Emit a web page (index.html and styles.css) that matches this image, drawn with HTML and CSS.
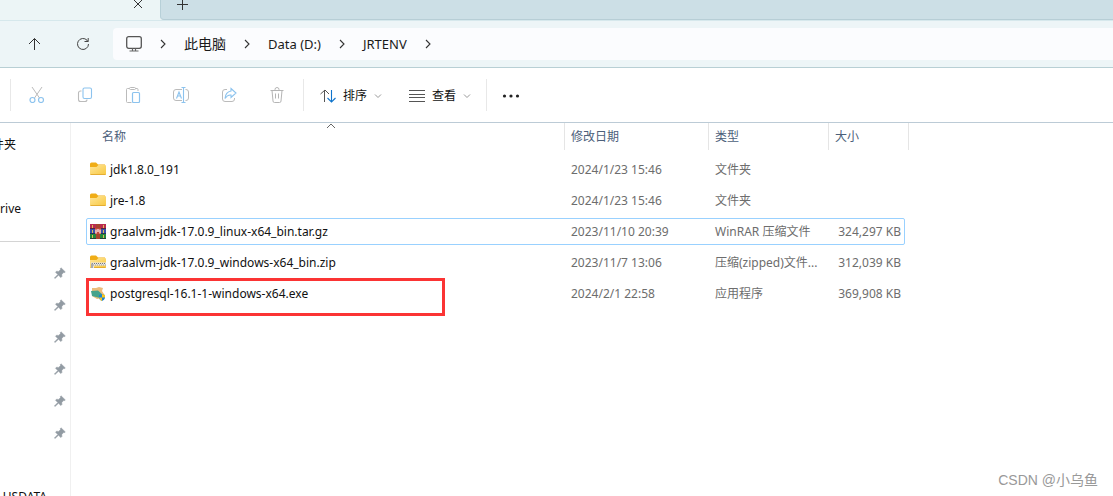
FILE: index.html
```html
<!DOCTYPE html>
<html lang="zh-CN">
<head>
<meta charset="utf-8">
<title>JRTENV</title>
<meta name="viewport" content="width=device-width, initial-scale=1">
<link rel="stylesheet" href="styles.css">
</head>
<body>
<svg class="defs" aria-hidden="true">
  <linearGradient id="folder-fill" x1="0" y1="0" x2="1" y2="1"><stop offset="0" stop-color="#ffe69a"/><stop offset="1" stop-color="#f8c840"/></linearGradient>
  <symbol id="chevron" viewBox="0 0 8 10"><path d="M2 1l4 4-4 4" fill="none" stroke="#333" stroke-width="1.1"/></symbol>
  <symbol id="down" viewBox="0 0 8 8"><path d="M1 2.5l3 3 3-3" fill="none" stroke="#999"/></symbol>
  <symbol id="pin" viewBox="0 0 12 12"><path d="M7 .8l4.3 4.1-1.1.8-.7-.1-1.7 1.8.1 2.2-1 1-2.4-2.3L1 11.6l-.6-.6 3.4-3.5-2.3-2.3 1-1 2.2.2L6.500 2.500l-.2-.9z" fill="#929ba3" stroke="#929ba3" stroke-width=".5"/></symbol>
  <symbol id="folder" viewBox="0 0 16 14"><path d="M0 2a1.500 1.500 0 0 1 1.500-1.500H6L8 2.500h7v4H0z" fill="#f0ad16"/><path d="M0 5h6.500L8.500 3H15a1 1 0 0 1 1 1v8a1 1 0 0 1-1 1H1a1 1 0 0 1-1-1z" fill="url(#folder-fill)"/><path d="M.5 12.500h15" stroke="#e5ad32"/></symbol>
</svg>

<header class="tabs">
  <div class="tab"><button class="plain" aria-label="关闭标签页"><svg width="10" height="10" viewBox="0 0 10 10"><path d="M1 0l8 8M9 0L1 8" stroke="#333"/></svg></button></div>
  <div class="tab-rest"><button class="plain" aria-label="新建标签页"><svg width="11" height="11" viewBox="0 0 11 11"><path d="M5.500 0v10M0 4.500h11" stroke="#333"/></svg></button></div>
</header>

<nav class="nav" aria-label="地址栏">
  <button class="plain nav-button" aria-label="向上"><svg width="14" height="14" viewBox="0 0 14 14"><path d="M6.500 13V1.500M1 7l5.500-5.500L12 7" fill="none" stroke="#333"/></svg></button>
  <button class="plain nav-button" aria-label="刷新"><svg width="14" height="14" viewBox="0 0 14 14"><path d="M12.500 7A5.500 5.500 0 1 1 11 3.200L12 4.500M12.200 1v3.500H8.500" fill="none" stroke="#444"/></svg></button>
  <div class="address">
    <svg width="16" height="16" viewBox="0 0 16 16"><rect x=".7" y=".7" width="14.600" height="11.600" rx="2" fill="none" stroke="#555" stroke-width="1.300"/><path d="M6.500 12.500V15M9.500 12.500V15M3.500 15h9" stroke="#666" stroke-width="1.200"/></svg>
    <svg class="crumb-arrow" width="8" height="10"><use href="#chevron"/></svg>
    <a class="crumb crumb-cjk" href="#">此电脑</a>
    <svg class="crumb-arrow" width="8" height="10"><use href="#chevron"/></svg>
    <a class="crumb" href="#">Data (D:)</a>
    <svg class="crumb-arrow" width="8" height="10"><use href="#chevron"/></svg>
    <a class="crumb" href="#">JRTENV</a>
    <svg class="crumb-arrow" width="8" height="10"><use href="#chevron"/></svg>
  </div>
</nav>

<div class="toolbar" role="toolbar" aria-label="命令栏">
  <div class="group edit">
    <button class="plain tool" aria-label="剪切"><svg viewBox="0 0 16 16"><g fill="none" stroke="#bbb"><path d="M3 0l7.500 11M13 0L5.500 11"/><g stroke="#8cc3ee" stroke-width="1.200"><circle cx="3.500" cy="13" r="2.500"/><circle cx="12" cy="13" r="2.500"/></g></g></svg></button>
    <button class="plain tool" aria-label="复制"><svg viewBox="0 0 16 16"><g fill="none" stroke-width="1.100"><path d="M4.500 4H3.500a2 2 0 0 0-2 2v6.500a2 2 0 0 0 2 2h4.500a2 2 0 0 0 2-2" stroke="#bbb"/><rect x="6" y="1" width="8.500" height="10.500" rx="1.500" stroke="#8cc3ee"/></g></svg></button>
    <button class="plain tool" aria-label="粘贴"><svg viewBox="0 0 16 16"><g fill="none" stroke="#bbb"><path d="M6.500 15.500h-4a1 1 0 0 1-1-1v-12a1 1 0 0 1 1-1h2M10.500 1.500h1.500a1 1 0 0 1 1 1v1.500"/><rect x="4.500" y=".5" width="6" height="2" rx="1"/><rect x="7.500" y="5.500" width="7" height="10" rx="1" stroke="#8cc3ee" stroke-width="1.200"/></g></svg></button>
    <button class="plain tool" aria-label="重命名"><svg viewBox="0 0 16 16"><g fill="none" stroke="#bbb"><path d="M9 13.500H3a2.500 2.500 0 0 1-2.500-2.500V5A2.500 2.500 0 0 1 3 2.500h6M12.500 2.500h.5a2.500 2.500 0 0 1 2.500 2.500v6a2.500 2.500 0 0 1-2.500 2.500h-.5"/><path d="M3.500 11.500L6 5l2.500 6.500M4.500 9h3M8.500.5h4M10.500.5v15M8.500 15.500h4" stroke="#8cc3ee" stroke-width="1.100"/></g></svg></button>
    <button class="plain tool" aria-label="共享"><svg viewBox="0 0 16 16"><g fill="none"><path d="M6 2.500H4A2.500 2.500 0 0 0 1.500 5v7A2.500 2.500 0 0 0 4 14.500h7a2.500 2.500 0 0 0 2.500-2.500v-1" stroke="#bbb"/><path d="M10 1.500L15 6l-5 4.500V8Q6.500 7.500 4 11.500q.5-6.500 6-7.500z" stroke="#8cc3ee" stroke-width="1.100"/></g></svg></button>
    <button class="plain tool" aria-label="删除"><svg viewBox="0 0 16 16"><path d="M1.500 3.500h13M6 3.500V2.500a2 2 0 0 1 4 0v1M3 3.500l1 10.500a1.500 1.500 0 0 0 1.500 1.500h5a1.500 1.500 0 0 0 1.500-1.500l1-10.500M6.500 6.500v5M9.500 6.500v5" fill="none" stroke="#b5b5b5"/></svg></button>
  </div>
  <div class="group view">
    <button class="plain menu"><svg width="16" height="14" viewBox="0 0 16 14"><path d="M.5 5L5 1l4 4M4.500 1v12" fill="none" stroke="#555"/><path d="M7.500 9l4 4 4-4M11.500 13V1" fill="none" stroke="#0f74cc" stroke-width="1.100"/></svg><span>排序</span><svg width="8" height="8"><use href="#down"/></svg></button>
    <button class="plain menu"><svg width="16" height="12" viewBox="0 0 16 12"><path d="M0 .5h16M0 4.500h16M0 7.500h16M0 11.500h16" stroke="#555"/></svg><span>查看</span><svg width="8" height="8"><use href="#down"/></svg></button>
  </div>
  <div class="group more">
    <button class="plain" aria-label="查看更多"><svg width="18" height="4" viewBox="0 0 18 4"><g fill="#222"><circle cx="2.500" cy="2" r="1.600"/><circle cx="9" cy="2" r="1.600"/><circle cx="15.500" cy="2" r="1.600"/></g></svg></button>
  </div>
</div>

<main class="main">
  <aside class="side">
    <div class="side-item"><span class="side-label folder-label">文件夹</span></div>
    <div class="side-item"></div>
    <div class="side-item"><span class="side-label drive-label">OneDrive</span></div>
    <div class="side-item"><hr class="rule"></div>
    <div class="side-item pinned"><svg width="12" height="12"><use href="#pin"/></svg></div>
    <div class="side-item pinned"><svg width="12" height="12"><use href="#pin"/></svg></div>
    <div class="side-item pinned"><svg width="12" height="12"><use href="#pin"/></svg></div>
    <div class="side-item pinned"><svg width="12" height="12"><use href="#pin"/></svg></div>
    <div class="side-item pinned"><svg width="12" height="12"><use href="#pin"/></svg></div>
    <div class="side-item pinned"><svg width="12" height="12"><use href="#pin"/></svg></div>
    <div class="side-item"></div>
    <div class="side-item"><span class="side-label data-label">USDATA</span></div>
  </aside>
  <section class="content">
    <table class="files">
      <colgroup><col class="c-name"><col class="c-date"><col class="c-type"><col class="c-size"></colgroup>
      <thead><tr>
        <th class="name-head">名称<svg class="sort" width="10" height="6" viewBox="0 0 10 6"><path d="M1 5l4-4 4 4" fill="none" stroke="#666"/></svg></th>
        <th>修改日期</th><th>类型</th><th>大小</th>
      </tr></thead>
      <tbody>
        <tr><td><div class="file"><svg width="16" height="16" viewBox="0 0 16 16"><use href="#folder" width="16" height="14"/></svg>jdk1.8.0_191</div></td><td>2024/1/23 15:46</td><td>文件夹</td><td></td></tr>
        <tr><td><div class="file"><svg width="16" height="16" viewBox="0 0 16 16"><use href="#folder" width="16" height="14"/></svg>jre-1.8</div></td><td>2024/1/23 15:46</td><td>文件夹</td><td></td></tr>
        <tr class="focused"><td><div class="file"><svg width="16" height="16" viewBox="0 0 16 16"><path d="M0 0h16v5H0z" fill="#b92b50"/><path d="M0 5h16v5H0z" fill="#3850a8"/><path d="M0 10h16v5H0z" fill="#24883c"/><path d="M0 4.500h16M0 9.500h16M0 14.500h16" stroke="#26233a" stroke-opacity=".7"/><path d="M2.500 1v13M13.500 1v13" stroke="#e3bc55" stroke-dasharray="3 2"/><path d="M6 0h4v15H6z" fill="#a8442e"/><path d="M5 4h6v6H5z" fill="#c5463a"/><path d="M6 9.500V5.500M10 9.500V5.500M8 5v3" fill="none" stroke="#fff" stroke-width="1.200"/></svg>graalvm-jdk-17.0.9_linux-x64_bin.tar.gz</div></td><td>2023/11/10 20:39</td><td>WinRAR 压缩文件</td><td>324,297 KB</td></tr>
        <tr><td><div class="file"><svg width="16" height="16" viewBox="0 0 16 16"><use href="#folder" width="16" height="14"/><path d="M1 7.500h15v3H4V13H1z" fill="#e6e6e6"/><path d="M2 8.500h14" stroke="#777" stroke-dasharray="1 1"/><path d="M3 10h13" stroke="#999" stroke-dasharray="1 1"/><path d="M1 8.500h2V13H1z" fill="#aaa"/></svg>graalvm-jdk-17.0.9_windows-x64_bin.zip</div></td><td>2023/11/7 13:06</td><td>压缩(zipped)文件...</td><td>312,039 KB</td></tr>
        <tr class="marked"><td><div class="file"><svg width="16" height="16" viewBox="0 0 16 16"><path d="M2 2l4 0 3-1 4 1-1 3 2 3-2 4-5 1-5-3z" fill="#ecbd7c"/><path d="M1 5l7-.5 5 4.500-3 3-8-2z" fill="#46a38c"/><path d="M9 9l3-1 3 1v3Q14.500 14 12 15q-2.500-1-3-3z" fill="#1c83d8"/><path d="M12 8l3 1v2.500H12zM9 11.500H12V15q-2.500-1-3-3.500z" fill="#fac61c"/></svg>postgresql-16.1-1-windows-x64.exe</div></td><td>2024/2/1 22:58</td><td>应用程序</td><td>369,908 KB</td></tr>
      </tbody>
    </table>
    <p class="credit">CSDN @小乌鱼</p>
  </section>
</main>
</body>
</html>
```
FILE: styles.css
```css
*, ::before, ::after { box-sizing: border-box; }
body {
  margin: 0;
  height: 100vh;
  display: flex;
  flex-direction: column;
  overflow: hidden;
  background: #fff;
  color: #111;
  font: 12px/16px "Noto Sans", "Noto Sans CJK SC", sans-serif;
}
svg { display: block; flex: none; }
.defs { position: absolute; width: 0; height: 0; }
.plain { border: 0; padding: 0; background: none; color: inherit; font: inherit; display: flex; align-items: center; justify-content: center; }

.tabs { display: flex; height: 21px; flex: none; background: #ecf5f6; border-bottom: 1px solid #d6e8ec; }
.tab { width: 160px; display: flex; justify-content: flex-end; align-items: flex-start; padding-right: 17px; }
.tab-rest { flex: 1; display: flex; align-items: flex-start; padding-left: 16px; background: #ccdfe6; border-left: 1px solid #b7d0d8; border-bottom: 1px solid #b7ced6; border-bottom-left-radius: 4px; }

.nav { display: flex; align-items: center; height: 47px; flex: none; padding-left: 11px; background: #edf5f7; border-bottom: 1px solid #b8cfd4; }
.nav-button { width: 48px; height: 32px; }
.address { flex: 1; height: 32px; display: flex; align-items: center; margin-left: 6px; padding-left: 13px; background: #fbfcfe; border-radius: 4px 0 0 4px; }
.crumb { color: #1a1a1a; text-decoration: none; font-size: 13px; }
.crumb-cjk { font-size: 14px; }
.crumb-arrow { margin: 0 17px; }

.toolbar { display: flex; align-items: center; height: 55px; flex: none; padding-left: 10px; border-bottom: 1px solid #bccbd6; }
.group { display: flex; align-items: center; height: 32px; border-left: 1px solid #e8e8e8; }
.edit { gap: 16px; padding: 0 10px; }
.tool { width: 32px; height: 32px; }
.tool svg { width: 16px; height: 16px; }
.view { gap: 27px; padding: 2px 15px 0 16px; }
.menu { gap: 7px; }
.more { padding: 2px 0 0 15px; }

.main { flex: 1; display: flex; min-height: 0; }
.side { width: 71px; flex: none; padding-top: 6px; overflow: hidden; border-right: 1px solid #f0f0f0; }
.side-item { height: 32px; display: flex; align-items: center; }
.side-label { display: flex; justify-content: flex-end; white-space: nowrap; color: #111; }
.folder-label { width: 16px; }
.drive-label { width: 21px; }
.data-label { width: 47px; }
.rule { width: 60px; margin: 0; border: 0; border-top: 1px solid #d4d4d4; }
.pinned { justify-content: flex-end; padding-right: 4px; }

.content { flex: 1; min-width: 0; display: flex; flex-direction: column; justify-content: space-between; padding-left: 15px; }
.files { width: 823px; table-layout: fixed; border-collapse: separate; border-spacing: 0; }
.c-name { width: 479px; }
.c-date { width: 144px; }
.c-type { width: 120px; }
.c-size { width: 80px; }
.files th { height: 31px; padding: 6px 6px 9px; text-align: left; vertical-align: top; font-weight: 400; color: #4c607a; background: linear-gradient(#e5e5e5, #e5e5e5) right top / 1px 27px no-repeat; }
.files .name-head { position: relative; padding-left: 16px; }
.sort { position: absolute; top: 0; left: 50%; }
.files td { height: 31px; padding: 0 6px; white-space: nowrap; color: #6d6d6d; }
.files td:first-child { padding-left: 4px; color: #111; }
.files td:last-child { padding-right: 8px; text-align: right; }
.file { display: flex; align-items: center; gap: 4px; }
.files tbody tr { position: relative; }
.focused::after { content: ""; position: absolute; inset: 2px 4px 2px 0; border: 1px solid #99d1ff; border-radius: 2px; }
.marked::after { content: ""; position: absolute; top: 0; left: 0; width: 359px; height: 38px; border: 3px solid #fb3434; }
.credit { align-self: flex-end; margin: 0; padding: 0 15px 6px 0; font: 14px/20px "Liberation Sans", "Noto Sans CJK SC", sans-serif; color: #999; }
```
